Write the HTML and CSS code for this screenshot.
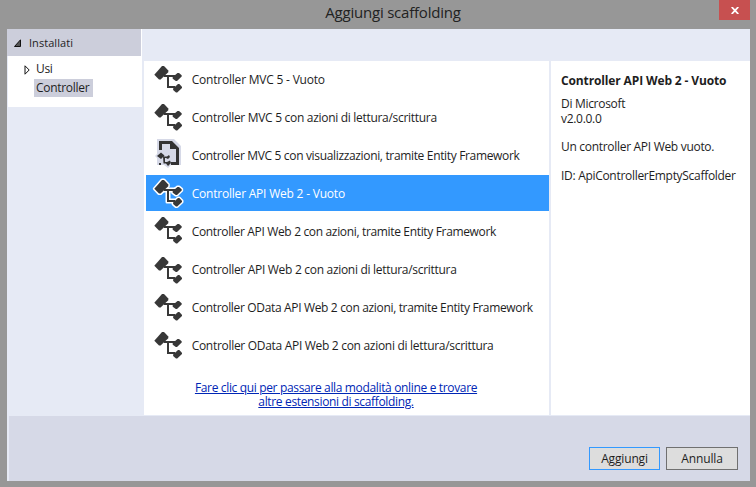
FILE: index.html
```html
<!DOCTYPE html>
<html lang="it">
<head>
<meta charset="utf-8">
<title>Aggiungi scaffolding</title>
<link rel="stylesheet" href="styles.css">
</head>
<body>
<svg class="defs" width="0" height="0" aria-hidden="true">
  <symbol id="controller" viewBox="0 0 40 40">
    <path d="M4.3 14.8 12 6H14L18.3 10.6V12.2L10.6 19.6H9Z"/>
    <path d="M14 15H25V17H19V26H25V28H17V17H14Z"/>
    <path d="M22.7 17 27.5 13H29L31.7 15.2V16.5L27 21H25.8L22.7 18.7Z"/>
    <path d="M23.1 28.5 28 24H29.3L32 26.7V28L27.2 32.5H26L23.1 30Z"/>
  </symbol>
</svg>
<div class="titlebar"><h1>Aggiungi scaffolding</h1>
  <button class="close" aria-label="Chiudi"><svg width="8" height="7" viewBox="0 0 8 7"><path d="M.7 0 7.3 7M7.3 0 .7 7"/></svg></button>
</div>
<main class="dialog">
  <div class="content">
    <nav class="sidebar">
      <div class="group"><svg width="7" height="8" viewBox="0 0 7 8"><path d="M6.5.8V7.5H.5Z" fill="#555" stroke="#111"/></svg><span>Installati</span></div>
      <div class="tree">
        <div class="node"><svg width="6" height="10" viewBox="0 0 6 10"><path d="M1 .8V9.2L5.2 5Z" fill="#fff" stroke="#111"/></svg><span>Usi</span></div>
        <div class="node current"><span>Controller</span></div>
      </div>
    </nav>
    <section class="list">
      <ul>
        <li><svg class="icon"><use href="#controller"/></svg><span class="loose">Controller MVC 5 - Vuoto</span></li>
        <li><svg class="icon"><use href="#controller"/></svg><span>Controller MVC 5 con azioni di lettura/scrittura</span></li>
        <li><svg class="icon page" viewBox="0 0 40 40"><path class="halo" d="M7 3H24L31 10V29H21L18 32 14 29H7V22L5 20 7 18Z"/><path d="M9 5H22L29 12V29H21V26H26V13H20V8H12V14H9Z"/><path d="M7 20 11 16.5 14.5 19.5 11 23ZM9 27H11V29H9ZM13 20.5H17L19 19 20 21 18 23 16 22H15V26H17L20 24.5 21 27 18 30 16 27.5H13.5Z"/></svg><span class="tight">Controller MVC 5 con visualizzazioni, tramite Entity Framework</span></li>
        <li class="selected"><svg class="icon"><use class="outline" href="#controller"/><use href="#controller"/></svg><span class="loose">Controller API Web 2 - Vuoto</span></li>
        <li><svg class="icon high"><use href="#controller"/></svg><span class="tight">Controller API Web 2 con azioni, tramite Entity Framework</span></li>
        <li><svg class="icon low"><use href="#controller"/></svg><span>Controller API Web 2 con azioni di lettura/scrittura</span></li>
        <li><svg class="icon"><use href="#controller"/></svg><span class="tight">Controller OData API Web 2 con azioni, tramite Entity Framework</span></li>
        <li><svg class="icon"><use href="#controller"/></svg><span>Controller OData API Web 2 con azioni di lettura/scrittura</span></li>
      </ul>
      <a class="online" href="#">Fare clic qui per passare alla modalità online e trovare<br>altre estensioni di scaffolding.</a>
    </section>
    <aside class="details">
      <h2>Controller API Web 2 - Vuoto</h2>
      <p>Di Microsoft<br>v2.0.0.0</p>
      <p>Un controller API Web vuoto.</p>
      <p>ID: ApiControllerEmptyScaffolder</p>
    </aside>
  </div>
  <footer><button class="btn primary">Aggiungi</button><button class="btn">Annulla</button></footer>
</main>
</body>
</html>
```

FILE: styles.css
```css
* { box-sizing: border-box; }
body { margin: 0; width: 756px; height: 487px; overflow: hidden; background: #979797; color: #1e1e1e; font: 12px/14px "Open Sans", "Noto Sans", sans-serif; letter-spacing: -.3px; }
.defs { position: absolute; }
.titlebar { height: 29px; display: flex; padding-left: 67px; }
h1 { flex: 1; margin: 0; padding-top: 2px; text-align: center; font-size: 15px; line-height: 20px; font-weight: 400; letter-spacing: -.22px; color: #222; }
.close { width: 31px; height: 20px; margin-right: 6px; padding: 1px 0 0 1px; border: 0; background: #c75050; display: flex; align-items: center; justify-content: center; }
.close path { stroke: #fff; stroke-width: 1.8; fill: none; }
.dialog { width: 743px; height: 452px; margin-left: 7px; background: #e6eaf5; }
.content { height: 387px; display: flex; }
.sidebar { width: 135px; height: 78px; background: #fff; border-left: 1px solid #e6eaf5; }
.group { height: 27px; width: 134px; margin-left: -1px; background: #cccedb; display: flex; align-items: center; padding-left: 7px; gap: 8px; font-size: 11px; letter-spacing: .05px; }
.tree { padding-top: 4px; }
.node { height: 19px; display: flex; align-items: center; padding-left: 16px; gap: 6px; }
.node > span { margin-top: -2px; }
.node.current { margin-top: -1px; padding-left: 26px; }
.node.current > span { width: 59px; height: 18px; line-height: 17px; margin-top: 0; padding-left: 2px; background: #cccedb; }
.list { width: 405px; height: 354px; margin: 32px 0 0 2px; background: #fff; padding-left: 2px; }
ul { list-style: none; margin: 0; padding: 0; display: flex; flex-direction: column; gap: 2px; }
li { height: 36px; display: flex; align-items: center; white-space: nowrap; padding-left: 4px; gap: 1.7px; }
li span { margin-top: 2px; }
.loose { letter-spacing: -.21px; }
.tight { letter-spacing: -.34px; }
.icon { width: 40px; height: 40px; flex: none; fill: #383838; margin-top: 2px; overflow: visible; }
.page { fill: #333; }
.low { margin-top: 4px; }
.high { margin-top: 0; }
.halo { fill: #d6d9e7; }
.outline { fill: #fff; stroke: #fff; stroke-width: 3px; stroke-linejoin: round; }
.selected { background: #3399ff; color: #fff; }
.online { display: block; width: 380px; margin-top: 18px; text-align: center; color: #0026b5; text-decoration: underline; letter-spacing: -.345px; }
.details { width: 199px; height: 354px; margin: 32px 0 0 2px; background: #fff; padding: 13px 0 0 10px; white-space: nowrap; }
.details h2 { margin: 0 0 9px; font-size: 12px; line-height: 14px; font-weight: 700; letter-spacing: -.13px; }
.details p { margin: 0 0 14px; line-height: 14.5px; }
footer { height: 65px; margin-left: 2px; background: #d6d9e7; display: flex; justify-content: flex-end; gap: 6px; padding: 31px 12px 0 0; }
.btn { width: 72px; height: 23px; padding: 0; border: 1px solid #707070; background: #ddd; color: #1e1e1e; font: inherit; letter-spacing: -.15px; }
.primary { width: 71px; border-color: #3399ff; }
```
